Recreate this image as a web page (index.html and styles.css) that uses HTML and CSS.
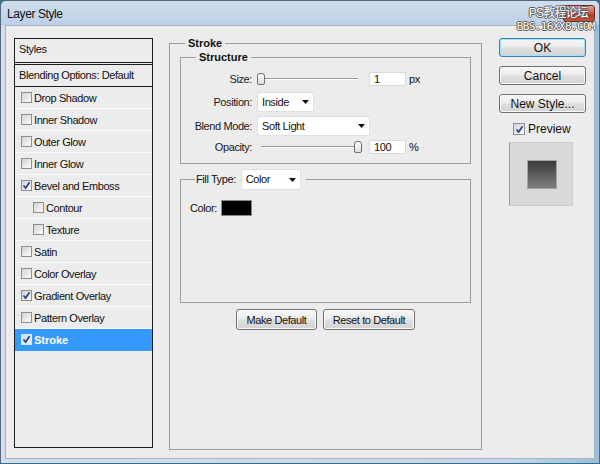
FILE: index.html
```html
<!DOCTYPE html>
<html>
<head>
<meta charset="utf-8">
<title>Layer Style</title>
<link rel="stylesheet" href="styles.css">
</head>
<body>
<div class="window">
  <div class="titlebar">
    <span class="title">Layer Style</span>
    <span class="close"></span>
    <div class="watermark"><span class="wm1">PS教程论坛</span><span class="wm2">BBS.16XX8.COM</span></div>
  </div>
  <div class="body">
    <div class="styles">
      <div class="styles-head">Styles</div>
      <div class="blend-row">Blending Options: Default</div>
      <ul class="fx">
        <li><span class="cb"></span>Drop Shadow</li>
        <li><span class="cb"></span>Inner Shadow</li>
        <li><span class="cb"></span>Outer Glow</li>
        <li><span class="cb"></span>Inner Glow</li>
        <li><span class="cb"><svg viewBox="0 0 9 9" width="9" height="9"><path d="M1.5 4.5 L3.6 7 L7.6 1.3" /></svg></span>Bevel and Emboss</li>
        <li class="sub"><span class="cb"></span>Contour</li>
        <li class="sub"><span class="cb"></span>Texture</li>
        <li><span class="cb"></span>Satin</li>
        <li><span class="cb"></span>Color Overlay</li>
        <li><span class="cb"><svg viewBox="0 0 9 9" width="9" height="9"><path d="M1.5 4.5 L3.6 7 L7.6 1.3" /></svg></span>Gradient Overlay</li>
        <li><span class="cb"></span>Pattern Overlay</li>
        <li class="sel"><span class="cb"><svg viewBox="0 0 9 9" width="9" height="9"><path d="M1.5 4.5 L3.6 7 L7.6 1.3" /></svg></span>Stroke</li>
      </ul>
    </div>

    <fieldset class="group stroke">
      <legend>Stroke</legend>
      <fieldset class="group structure">
        <legend>Structure</legend>
        <div class="form">
          <span class="lbl">Size:</span>
          <div class="ctl">
            <div class="slider"><span class="track"></span><span class="thumb"></span></div>
            <span class="num">1</span><span class="unit">px</span>
          </div>
          <span class="lbl">Position:</span>
          <div class="ctl"><span class="select w57">Inside<svg class="arrow" viewBox="0 0 7 4" width="7" height="4"><path d="M0 0 H7 L3.5 4 Z"/></svg></span></div>
          <span class="lbl">Blend Mode:</span>
          <div class="ctl"><span class="select w113">Soft Light<svg class="arrow" viewBox="0 0 7 4" width="7" height="4"><path d="M0 0 H7 L3.5 4 Z"/></svg></span></div>
          <span class="lbl">Opacity:</span>
          <div class="ctl">
            <div class="slider"><span class="track"></span><span class="thumb right"></span></div>
            <span class="num">100</span><span class="unit">%</span>
          </div>
        </div>
      </fieldset>
      <fieldset class="group fill">
        <legend class="fill-legend"><span>Fill Type:</span><span class="select w60">Color<svg class="arrow" viewBox="0 0 7 4" width="7" height="4"><path d="M0 0 H7 L3.5 4 Z"/></svg></span></legend>
        <div class="fill-body">
          <div class="color-row"><span>Color:</span><span class="swatch"></span></div>
        </div>
      </fieldset>
      <div class="btn-row">
        <button class="btn w81">Make Default</button>
        <button class="btn w92">Reset to Default</button>
      </div>
    </fieldset>

    <div class="actions">
      <button class="btn big ok">OK</button>
      <button class="btn big">Cancel</button>
      <button class="btn big">New Style...</button>
      <div class="preview-check"><span class="cb"><svg viewBox="0 0 9 9" width="9" height="9"><path d="M1.5 4.5 L3.6 7 L7.6 1.3" /></svg></span>Preview</div>
      <div class="preview-box"><div class="preview-sq"></div></div>
    </div>
  </div>
</div>
</body>
</html>
```

FILE: styles.css
```css
* { box-sizing: border-box; }
html, body { margin: 0; padding: 0; }
body {
  width: 600px;
  height: 464px;
  overflow: hidden;
  font-family: "Liberation Sans", Arial, sans-serif;
  font-size: 11px;
  letter-spacing: -0.4px;
  color: #111;
  background: #3a6e88;
}

.window {
  width: 600px;
  height: 464px;
  display: flex;
  flex-direction: column;
  background: linear-gradient(to right, #d4dee9 0%, #c6d6e8 85%, #9cbfd9 100%);
  border: 1px solid #54677c;
  border-bottom-color: #2f6f8a;
  border-radius: 6px 6px 0 0;
}

.titlebar {
  position: relative;
  flex: none;
  height: 24px;
  padding: 5px 0 0 6px;
  background: linear-gradient(#d0ddec, #bdd0e6);
  border-radius: 5px 5px 0 0;
  font-size: 12px;
  color: #111;
}
.title { line-height: 16px; }

.close {
  position: absolute;
  right: 4px;
  top: 4px;
  width: 32px;
  height: 17px;
  border: 1px solid #6d2a22;
  border-radius: 3px;
  background: linear-gradient(#e3a08f, #c95a48 50%, #b23a28 51%, #c4503a);
}
.watermark {
  position: absolute;
  right: 4px;
  top: 5px;
  display: flex;
  flex-direction: column;
  align-items: flex-end;
  color: #fff;
  letter-spacing: 0;
  text-shadow: 1px 0 #5a5a5a, -1px 0 #5a5a5a, 0 1px #5a5a5a, 0 -1px #5a5a5a;
}
.wm1 {
  font-family: "Liberation Sans", "Noto Sans CJK SC", sans-serif;
  font-size: 12px;
  letter-spacing: -0.8px;
  line-height: 15px;
  margin-right: 7px;
}
.wm2 {
  font-family: "DejaVu Sans Mono", monospace;
  font-size: 11px;
  letter-spacing: -0.6px;
  line-height: 12px;
}

.body {
  flex: 1;
  margin: 0 4px 4px 4px;
  background: #ececec;
  border: 1px solid #a3b4c7;
  display: flex;
  align-items: flex-start;
  padding: 12px 8px 0 8px;
}

/* styles list */
.styles {
  flex: none;
  width: 139px;
  height: 410px;
  border: 1px solid #1c1c1c;
}
.styles-head {
  height: 26px;
  line-height: 21px;
  padding-left: 4px;
  border-bottom: 3px double #1c1c1c;
}
.blend-row {
  height: 22px;
  line-height: 21px;
  padding-left: 4px;
  border-bottom: 1px solid #1c1c1c;
}
.fx { list-style: none; margin: 0; padding: 0; }
.fx li {
  height: 22px;
  display: flex;
  align-items: center;
  gap: 2px;
  padding: 0 0 0 6px;
  border-bottom: 1px solid #fafafa;
}
.fx li.sub { padding-left: 18px; }
.fx li.sel {
  background: #3399ff;
  border-bottom-color: #3399ff;
  color: #fff;
  font-weight: bold;
  letter-spacing: 0;
}

.cb {
  flex: none;
  width: 11px;
  height: 11px;
  border: 1px solid #8f8f8f;
  background: linear-gradient(135deg, #d3d3d3, #fbfbfb);
  display: flex;
  align-items: center;
  justify-content: center;
}
.cb svg path {
  fill: none;
  stroke: #2a3f93;
  stroke-width: 1.7;
}
.sel .cb { border-color: #e0e8f5; background: linear-gradient(135deg, #cfd6e2, #f4f6fa); }

/* group boxes */
fieldset.group {
  margin: 0;
  padding: 0;
  min-width: 0;
  border: 1px solid #9d9d9d;
}
fieldset.group > legend {
  padding: 0 3px;
  margin-left: 15px;
  font-weight: bold;
  letter-spacing: 0;
  line-height: 13px;
}
.stroke {
  flex: none;
  width: 313px;
  height: 413px;
  margin-left: 16px !important;
  margin-top: -1px !important;
}
.structure { margin: 1px 10px 0 10px !important; }

.form {
  display: grid;
  grid-template-columns: 71px 1fr;
  grid-template-rows: 22px 24px 24px 18px;
  column-gap: 5px;
  padding: 4px 0 7px 0;
}
.lbl {
  text-align: right;
  align-self: center;
  color: #1a1a1a;
}
.ctl { display: flex; align-items: center; }

.slider {
  position: relative;
  width: 105px;
  height: 14px;
  display: flex;
  align-items: center;
}
.track {
  flex: 1;
  margin: 0 4px;
  height: 2px;
  border-top: 1px solid #9a9a9a;
  border-bottom: 1px solid #ffffff;
}
.thumb {
  position: absolute;
  left: 0;
  top: 1px;
  width: 8px;
  height: 12px;
  border: 1px solid #6f6f6f;
  border-radius: 3px 3px 2px 2px;
  background: linear-gradient(#ffffff, #dedede);
}
.thumb.right { left: auto; right: 0; }

.num {
  width: 37px;
  height: 14px;
  margin-left: 7px;
  padding-left: 4px;
  line-height: 12px;
  background: #fff;
  border: 1px solid #d9d9d9;
}
.unit { margin-left: 3px; }

.select {
  display: flex;
  align-items: center;
  justify-content: space-between;
  height: 20px;
  padding: 0 4px 0 4px;
  background: #fff;
  border: 1px solid #e0e0e0;
  font-weight: normal;
  letter-spacing: -0.4px;
}
.select .arrow { fill: #111; }
.w57 { width: 57px; }
.w113 { width: 113px; }
.w60 { width: 60px; height: 21px; }

.fill { margin: 5px 10px 0 10px !important; }
fieldset.fill > legend.fill-legend {
  display: flex;
  align-items: center;
  gap: 5px;
  margin-left: 14px;
  padding: 0 5px 0 1px;
  font-weight: normal;
  letter-spacing: -0.4px;
  line-height: 21px;
}
.fill-body { height: 112px; }
.color-row {
  display: flex;
  align-items: center;
  gap: 4px;
  padding: 10px 0 0 9px;
}
.swatch {
  width: 31px;
  height: 16px;
  background: #000;
  border: 1px solid #8a8a8a;
}

.btn-row {
  display: flex;
  justify-content: center;
  gap: 6px;
  margin-top: 6px;
}
.btn {
  font-family: "Liberation Sans", Arial, sans-serif;
  font-size: 11px;
  letter-spacing: -0.4px;
  color: #111;
  height: 21px;
  padding: 0;
  border: 1px solid #707070;
  border-radius: 3px;
  background: linear-gradient(#f6f6f6 0%, #ececec 45%, #dfdfdf 52%, #d3d3d3 100%);
  box-shadow: inset 0 0 0 1px #fbfbfb;
}
.w81 { width: 81px; }
.w92 { width: 92px; }

.actions {
  flex: none;
  width: 87px;
  margin-left: 17px;
  display: flex;
  flex-direction: column;
}
.btn.big {
  width: 87px;
  height: 19px;
  font-size: 12px;
  letter-spacing: 0;
  margin-bottom: 9px;
}
.btn.ok {
  border-color: #3c7fb1;
  box-shadow: inset 0 0 0 1px #a6def7;
}
.preview-check {
  display: flex;
  align-items: center;
  gap: 3px;
  margin: 1px 0 0 14px;
  height: 12px;
  font-size: 12px;
  letter-spacing: 0;
}
.preview-check .cb { width: 12px; height: 12px; }
.preview-box {
  width: 64px;
  height: 64px;
  margin: 7px 0 0 10px;
  background: #d9d9d9;
  border: 1px solid #cdcdcd;
  border-left-color: #9a9a9a;
  display: flex;
  align-items: center;
  justify-content: center;
}
.preview-sq {
  width: 30px;
  height: 29px;
  margin-left: 2px;
  border: 1px solid #a4a4a4;
  background: linear-gradient(#3b3b3b, #7e7e7e);
}
```
